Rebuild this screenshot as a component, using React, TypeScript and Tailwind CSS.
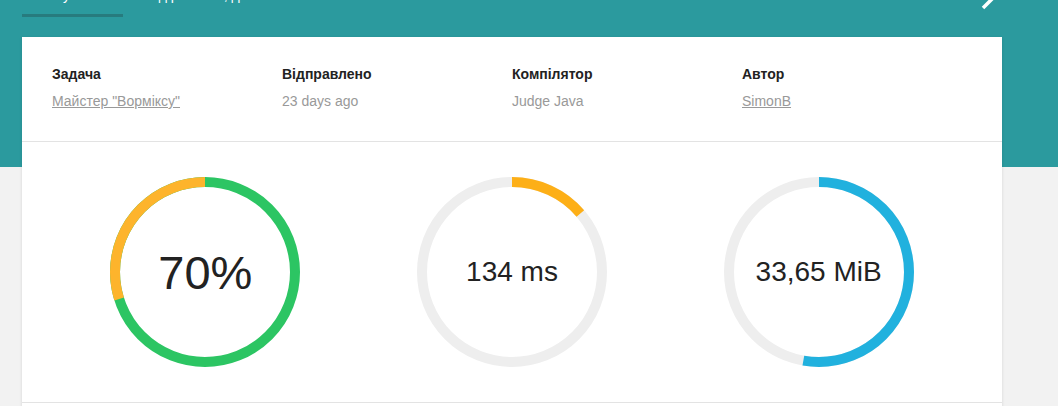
import React from "react";

const C = 2 * Math.PI * 90;

function Ring({
  base,
  arc,
  start,
  frac,
  label,
  size,
}: {
  base: string;
  arc: string;
  start: number;
  frac: number;
  label: string;
  size: string;
}) {
  return (
    <div className="relative w-[190px] h-[190px]">
      <svg width="190" height="190" viewBox="0 0 190 190" className="block">
        <circle cx="95" cy="95" r="90" fill="none" stroke={base} strokeWidth="10" />
        <circle
          cx="95"
          cy="95"
          r="90"
          fill="none"
          stroke={arc}
          strokeWidth="10"
          strokeDasharray={`${frac * C} ${C}`}
          strokeDashoffset={-start * C}
          transform="rotate(-90 95 95)"
        />
      </svg>
      <div className="absolute inset-0 flex items-center justify-center">
        <span className={`${size} text-[#222] leading-none`}>{label}</span>
      </div>
    </div>
  );
}

export default function App() {
  const meta = [
    { k: "Задача", v: "Майстер \"Ворміксу\"", link: true },
    { k: "Відправлено", v: "23 days ago", link: false },
    { k: "Компілятор", v: "Judge Java", link: false },
    { k: "Автор", v: "SimonB", link: true },
  ];
  return (
    <div
      className="min-h-[406px] bg-[#f2f2f2] overflow-hidden relative"
      style={{ fontFamily: '"Liberation Sans", Arial, sans-serif' }}
    >
      <div className="bg-[#2b9a9e] h-[167px] relative flow-root">
        <div className="flex pl-[22px] -mt-[15px] text-[14px] leading-[20px] text-white">
          <div className="w-[101px] text-center pb-[9px] border-b-[3px] border-[#277b7e]">Результат</div>
          <div className="px-[20px] pb-[9px] border-b-[3px] border-transparent">Код рішення, дані</div>
        </div>
        <svg
          className="absolute left-[970px] -top-[14px]"
          width="24"
          height="24"
          viewBox="0 0 24 24"
          fill="none"
          stroke="white"
          strokeWidth="3.5"
        >
          <path d="M13 22 L24 11" />
          <path d="M17 4 L24 -3" />
        </svg>
      </div>
      <div className="relative z-10 -mt-[130px] ml-[22px] w-[980px] bg-white shadow-[0_1px_3px_rgba(0,0,0,0.12)]">
        <div className="grid grid-cols-4 px-[30px] pt-[27px] pb-[30px] border-b border-[#e3e3e3]">
          {meta.map((m) => (
            <div key={m.k} className="text-[14px] leading-[20px]">
              <div className="font-bold text-[#222] mb-[7px]">{m.k}</div>
              <div className={`text-[#999] ${m.link ? "underline" : ""}`}>{m.v}</div>
            </div>
          ))}
        </div>
        <div className="grid grid-cols-3 px-[30px] py-[35px] border-b border-[#e3e3e3]">
          <div className="flex justify-center">
            <Ring base="#2cc563" arc="#fdb42c" start={0.7} frac={0.3} label="70%" size="text-[47px]" />
          </div>
          <div className="flex justify-center">
            <Ring base="#eeeeee" arc="#fdaf17" start={0} frac={0.137} label="134 ms" size="text-[28px]" />
          </div>
          <div className="flex justify-center">
            <Ring base="#eeeeee" arc="#21b1de" start={0} frac={0.527} label="33,65 MiB" size="text-[28px]" />
          </div>
        </div>
        <div className="h-[40px]" />
      </div>
    </div>
  );
}
